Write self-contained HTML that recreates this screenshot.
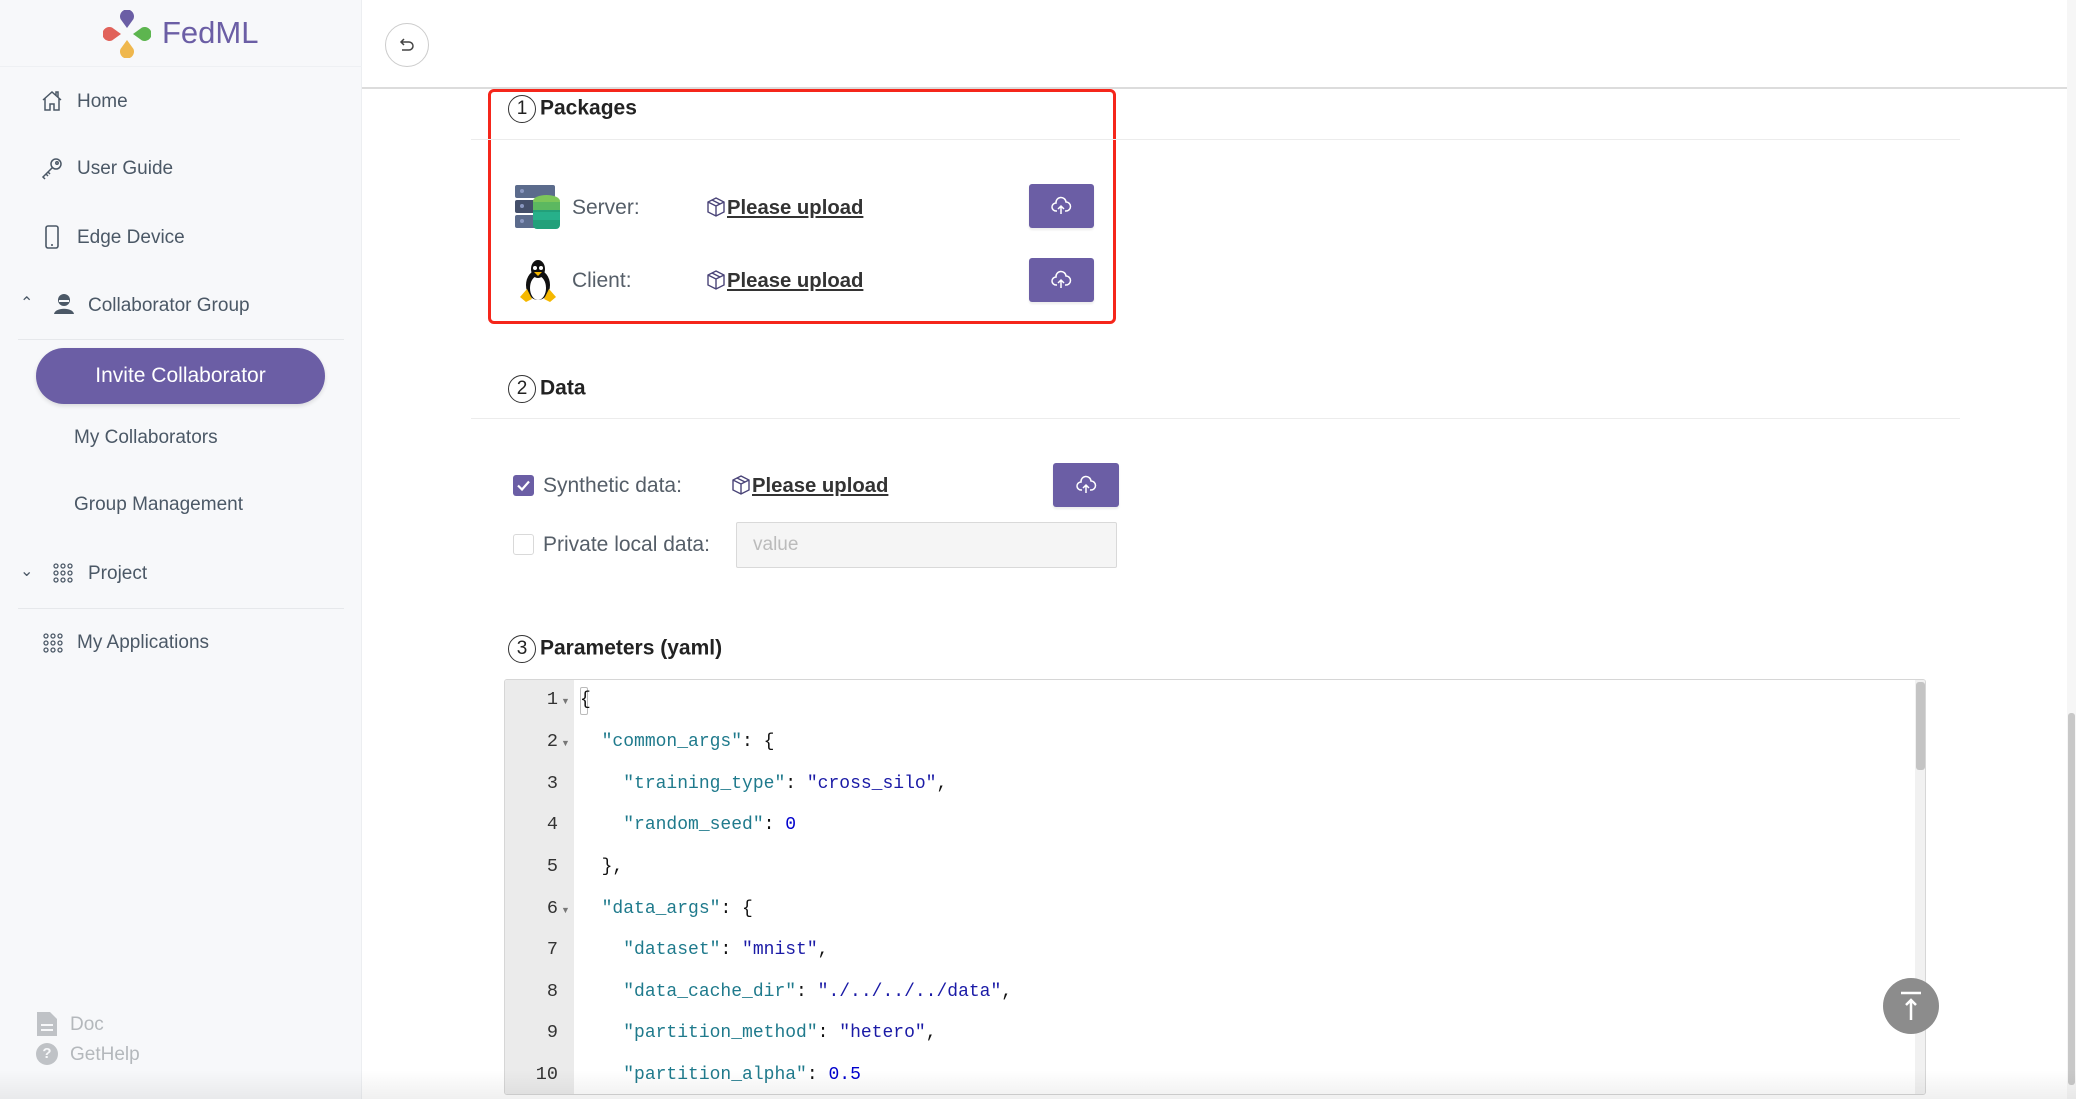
<!DOCTYPE html>
<html><head><meta charset="utf-8"><style>
*{margin:0;padding:0;box-sizing:border-box}
body{width:2076px;height:1099px;overflow:hidden;background:#fff;font-family:"Liberation Sans",sans-serif;position:relative}
.a{position:absolute}
.side{left:0;top:0;width:362px;height:1099px;background:#f7f8fa;border-right:1px solid #eceef1}
.nav{position:absolute;font-size:19px;color:#4b5866;line-height:24px;white-space:nowrap}
.hd{font-size:21px;font-weight:bold;color:#222;position:absolute;line-height:26px}
.num{display:inline-block;width:28px;height:28px;border:1.5px solid #333;border-radius:50%;text-align:center;font-weight:normal;font-size:19px;line-height:25px;margin-right:4px;vertical-align:middle}
.lbl{position:absolute;font-size:21px;color:#555e68;line-height:26px}
.lnk{position:absolute;font-size:20.3px;color:#333;font-weight:bold;text-decoration:underline;line-height:26px;white-space:nowrap}
.btn{position:absolute;background:#6b5ea5;border-radius:3px;box-shadow:0 2px 2px rgba(0,0,0,.08)}
.code{position:absolute;font-family:"Liberation Mono",monospace;font-size:18px;white-space:pre;line-height:24px;color:#111}
.ln{position:absolute;width:50px;text-align:right;font-family:"Liberation Mono",monospace;font-size:18.5px;color:#333;line-height:24px}
.k{color:#1f7a8c}.s{color:#1a1aa6}.n{color:#0000cd}
</style></head><body>
<div class="a side"></div>
<div class="a" style="left:0;top:66px;width:362px;height:1px;background:#eef0f3"></div>
<!-- logo -->
<svg class="a" style="left:103px;top:10px" width="48" height="48" viewBox="0 0 48 48">
<path d="M24 20 L17.5 11 A7 7 0 1 1 30.5 11 Z" fill="#6b5ea5" transform="translate(0,-2)"/>
<path d="M20 24 L11 17.5 A7 7 0 1 0 11 30.5 Z" fill="#e1625a" transform="translate(-2,0)"/>
<path d="M28 24 L37 17.5 A7 7 0 1 1 37 30.5 Z" fill="#5db54f" transform="translate(2,0)"/>
<path d="M24 28 L17.5 37 A7 7 0 1 0 30.5 37 Z" fill="#efb74d" transform="translate(0,2)"/>
</svg>
<div class="a" style="left:162px;top:14px;font-size:31px;color:#6b5ea5;line-height:38px">FedML</div>
<!-- nav icons -->
<svg class="a" style="left:40px;top:89px" width="24" height="24" viewBox="0 0 24 24" fill="none" stroke="#4b5866" stroke-width="1.5"><path d="M3 11 L12 3 L21 11 M5 9 V21 H10 V15 H14 V21 H19 V9 M16 6 V3 H18 V8"/></svg>
<div class="nav" style="left:77px;top:90px">Home</div>
<svg class="a" style="left:40px;top:156px" width="24" height="24" viewBox="0 0 24 24" fill="none" stroke="#4b5866" stroke-width="1.5"><circle cx="16" cy="8" r="5"/><circle cx="17" cy="7" r="1.2"/><path d="M12.5 11.5 L3 21 L5 23 M6 18 L8 20 M8 16 L10 18"/></svg>
<div class="nav" style="left:77px;top:157px">User Guide</div>
<svg class="a" style="left:42px;top:224px" width="20" height="26" viewBox="0 0 20 26" fill="none" stroke="#4b5866" stroke-width="1.6"><rect x="4" y="2" width="12" height="22" rx="2"/><path d="M9 21 H11"/></svg>
<div class="nav" style="left:77px;top:226px">Edge Device</div>
<div class="nav" style="left:20px;top:292px;font-size:16px">&#8963;</div>
<svg class="a" style="left:52px;top:292px" width="24" height="24" viewBox="0 0 24 24" fill="#4b5866"><circle cx="12" cy="8" r="6"/><path d="M2 22 C3 15 21 15 22 22Z"/><rect x="7" y="8" width="10" height="2" fill="#f7f8fa"/></svg>
<div class="nav" style="left:88px;top:294px">Collaborator Group</div>
<div class="a" style="left:18px;top:339px;width:326px;height:1px;background:#e6e8eb"></div>
<div class="a" style="left:36px;top:348px;width:289px;height:56px;border-radius:28px;background:#6b5ea5;color:#fff;font-size:21px;text-align:center;line-height:56px;box-shadow:0 2px 4px rgba(0,0,0,.12)">Invite Collaborator</div>
<div class="nav" style="left:74px;top:426px">My Collaborators</div>
<div class="nav" style="left:74px;top:493px">Group Management</div>
<div class="nav" style="left:20px;top:560px;font-size:16px">&#8964;</div>
<svg class="a" style="left:52px;top:562px" width="22" height="22" viewBox="0 0 22 22" fill="none" stroke="#4b5866" stroke-width="1.3"><g><circle cx="4" cy="4" r="2"/><circle cx="11" cy="4" r="2"/><circle cx="18" cy="4" r="2"/><circle cx="4" cy="11" r="2"/><circle cx="11" cy="11" r="2"/><circle cx="18" cy="11" r="2"/><circle cx="4" cy="18" r="2"/><circle cx="11" cy="18" r="2"/><circle cx="18" cy="18" r="2"/></g></svg>
<div class="nav" style="left:88px;top:562px">Project</div>
<div class="a" style="left:18px;top:608px;width:326px;height:1px;background:#e6e8eb"></div>
<svg class="a" style="left:42px;top:632px" width="22" height="22" viewBox="0 0 22 22" fill="none" stroke="#4b5866" stroke-width="1.3"><g><circle cx="4" cy="4" r="2"/><circle cx="11" cy="4" r="2"/><circle cx="18" cy="4" r="2"/><circle cx="4" cy="11" r="2"/><circle cx="11" cy="11" r="2"/><circle cx="18" cy="11" r="2"/><circle cx="4" cy="18" r="2"/><circle cx="11" cy="18" r="2"/><circle cx="18" cy="18" r="2"/></g></svg>
<div class="nav" style="left:77px;top:631px">My Applications</div>
<svg class="a" style="left:36px;top:1012px" width="22" height="24" viewBox="0 0 22 24"><path d="M1 0 H14 L21 7 V24 H1Z" fill="#bfc2c6"/><path d="M5 13 H17 M5 18 H17" stroke="#f7f8fa" stroke-width="2"/></svg>
<div class="nav" style="left:70px;top:1013px;color:#b4b8bc">Doc</div>
<div class="a" style="left:36px;top:1043px;width:22px;height:22px;border-radius:50%;background:#bfc2c6;color:#f7f8fa;font-size:15px;font-weight:bold;text-align:center;line-height:22px">?</div>
<div class="nav" style="left:70px;top:1043px;color:#b4b8bc">GetHelp</div>
<!-- header -->
<div class="a" style="left:362px;top:87px;width:1705px;height:2px;background:#dcdcdc"></div>
<div class="a" style="left:385px;top:23px;width:44px;height:44px;border-radius:50%;border:1.5px solid #ccc;background:#fff"></div>
<svg class="a" style="left:398px;top:36px" width="18" height="18" viewBox="0 0 18 18" fill="none" stroke="#444" stroke-width="1.5"><path d="M6 3 L3 6 L6 9 M3 6 H11 A4 4 0 0 1 11 14 H4"/></svg>
<!-- packages -->
<div class="a" style="left:488px;top:89px;width:628px;height:235px;border:3px solid #f5261b;border-radius:6px"></div>
<div class="hd" style="left:508px;top:95px"><span class="num">1</span>Packages</div>
<div class="a" style="left:471px;top:139px;width:1489px;height:1px;background:#ececec"></div>
<svg class="a" style="left:515px;top:185px" width="46" height="45" viewBox="0 0 46 45"><rect x="0" y="0" width="40" height="13" rx="2" fill="#5b6b8c"/><rect x="0" y="15" width="40" height="13" rx="2" fill="#444f6a"/><rect x="0" y="30" width="40" height="13" rx="2" fill="#5b6b8c"/><circle cx="7" cy="6" r="2" fill="#8a97c0"/><circle cx="7" cy="21" r="2" fill="#8a97c0"/><circle cx="7" cy="36" r="2" fill="#8a97c0"/><rect x="18" y="14" width="27" height="30" rx="4" fill="#22a07a"/><ellipse cx="31.5" cy="16" rx="13.5" ry="6" fill="#7cc65a"/><rect x="18" y="17" width="27" height="8" fill="#5cb860"/><rect x="18" y="27" width="27" height="8" fill="#27b08a"/></svg>
<div class="lbl" style="left:572px;top:195px">Server:</div>
<svg class="a" style="left:706px;top:197px" width="20" height="20" viewBox="0 0 20 20" fill="none" stroke="#4a4478" stroke-width="1.4"><path d="M10 1 L18 5 V15 L10 19 L2 15 V5Z M2 5 L10 9 L18 5 M10 9 V19 M6 3 L14 7"/></svg>
<div class="lnk" style="left:727px;top:195px">Please upload</div>
<div class="btn" style="left:1029px;top:184px;width:65px;height:44px"></div>
<svg class="a" style="left:1050px;top:195px" width="22" height="22" viewBox="0 0 22 22" fill="none" stroke="#fff" stroke-width="1.5"><path d="M7 16 H6 A4 4 0 0 1 6 8 A5 5 0 0 1 16 7 A4.5 4.5 0 0 1 16 16 H15 M11 19 V11 M8 14 L11 11 L14 14"/></svg>
<svg class="a" style="left:518px;top:259px" width="40" height="43" viewBox="0 0 40 43"><ellipse cx="20" cy="26" rx="12" ry="15" fill="#111"/><ellipse cx="20" cy="29" rx="8" ry="12" fill="#fff"/><ellipse cx="20" cy="10" rx="7" ry="9" fill="#111"/><circle cx="17" cy="9" r="2" fill="#fff"/><circle cx="23" cy="9" r="2" fill="#fff"/><path d="M16 13 L24 13 L20 17Z" fill="#f5b800"/><path d="M2 38 L9 30 L14 40 L8 43Z M38 38 L31 30 L26 40 L32 43Z" fill="#f5b800"/></svg>
<div class="lbl" style="left:572px;top:268px">Client:</div>
<svg class="a" style="left:706px;top:270px" width="20" height="20" viewBox="0 0 20 20" fill="none" stroke="#4a4478" stroke-width="1.4"><path d="M10 1 L18 5 V15 L10 19 L2 15 V5Z M2 5 L10 9 L18 5 M10 9 V19 M6 3 L14 7"/></svg>
<div class="lnk" style="left:727px;top:268px">Please upload</div>
<div class="btn" style="left:1029px;top:258px;width:65px;height:44px"></div>
<svg class="a" style="left:1050px;top:269px" width="22" height="22" viewBox="0 0 22 22" fill="none" stroke="#fff" stroke-width="1.5"><path d="M7 16 H6 A4 4 0 0 1 6 8 A5 5 0 0 1 16 7 A4.5 4.5 0 0 1 16 16 H15 M11 19 V11 M8 14 L11 11 L14 14"/></svg>
<!-- data -->
<div class="hd" style="left:508px;top:375px"><span class="num">2</span>Data</div>
<div class="a" style="left:471px;top:418px;width:1489px;height:1px;background:#ececec"></div>
<div class="a" style="left:513px;top:475px;width:21px;height:21px;border-radius:3px;background:#6b5ea5"></div>
<svg class="a" style="left:513px;top:475px" width="21" height="21" viewBox="0 0 21 21" fill="none" stroke="#fff" stroke-width="2.2"><path d="M5 10.5 L9 14.5 L16 6.5"/></svg>
<div class="lbl" style="left:543px;top:473px">Synthetic data:</div>
<svg class="a" style="left:731px;top:475px" width="20" height="20" viewBox="0 0 20 20" fill="none" stroke="#4a4478" stroke-width="1.4"><path d="M10 1 L18 5 V15 L10 19 L2 15 V5Z M2 5 L10 9 L18 5 M10 9 V19 M6 3 L14 7"/></svg>
<div class="lnk" style="left:752px;top:473px">Please upload</div>
<div class="btn" style="left:1053px;top:463px;width:66px;height:44px"></div>
<svg class="a" style="left:1075px;top:474px" width="22" height="22" viewBox="0 0 22 22" fill="none" stroke="#fff" stroke-width="1.5"><path d="M7 16 H6 A4 4 0 0 1 6 8 A5 5 0 0 1 16 7 A4.5 4.5 0 0 1 16 16 H15 M11 19 V11 M8 14 L11 11 L14 14"/></svg>
<div class="a" style="left:513px;top:534px;width:21px;height:21px;border-radius:3px;border:1.5px solid #d9d9d9;background:#fff"></div>
<div class="lbl" style="left:543px;top:532px">Private local data:</div>
<div class="a" style="left:736px;top:522px;width:381px;height:46px;border:1.5px solid #d9d9d9;border-radius:2px;background:#f5f5f5;color:#bbb;font-size:19px;line-height:43px;padding-left:16px">value</div>
<!-- params -->
<div class="hd" style="left:508px;top:635px"><span class="num">3</span>Parameters (yaml)</div>
<div class="a" style="left:504px;top:679px;width:1422px;height:416px;border:1.5px solid #d6d6d6;border-radius:3px;background:#fff;overflow:hidden">
 <div class="a" style="left:0;top:0;width:69px;height:420px;background:#ebebeb"></div>
 <div class="a" style="left:1410px;top:0;width:12px;height:420px;background:#f1f1f1"></div>
 <div class="a" style="left:1411px;top:2px;width:9px;height:88px;border-radius:3px;background:#c4c4c4"></div>
 <div class="a" style="left:75px;top:7px;width:8px;height:28px;border:1px solid #bbb;border-radius:2px"></div>
</div>
<div class="ln" style="left:508px;top:688px">1</div><div class="ln" style="left:508px;top:730px">2</div><div class="ln" style="left:508px;top:772px">3</div><div class="ln" style="left:508px;top:813px">4</div><div class="ln" style="left:508px;top:855px">5</div><div class="ln" style="left:508px;top:897px">6</div><div class="ln" style="left:508px;top:938px">7</div><div class="ln" style="left:508px;top:980px">8</div><div class="ln" style="left:508px;top:1021px">9</div><div class="ln" style="left:508px;top:1063px">10</div>
<div class="a" style="left:561px;top:696px;font-size:9px;color:#777">&#9660;</div><div class="a" style="left:561px;top:738px;font-size:9px;color:#777">&#9660;</div><div class="a" style="left:561px;top:905px;font-size:9px;color:#777">&#9660;</div>
<div class="code" style="left:580px;top:688px">{</div>
<div class="code" style="left:580px;top:730px">  <span class="k">"common_args"</span>: {</div>
<div class="code" style="left:580px;top:772px">    <span class="k">"training_type"</span>: <span class="s">"cross_silo"</span>,</div>
<div class="code" style="left:580px;top:813px">    <span class="k">"random_seed"</span>: <span class="n">0</span></div>
<div class="code" style="left:580px;top:855px">  },</div>
<div class="code" style="left:580px;top:897px">  <span class="k">"data_args"</span>: {</div>
<div class="code" style="left:580px;top:938px">    <span class="k">"dataset"</span>: <span class="s">"mnist"</span>,</div>
<div class="code" style="left:580px;top:980px">    <span class="k">"data_cache_dir"</span>: <span class="s">"./../../../data"</span>,</div>
<div class="code" style="left:580px;top:1021px">    <span class="k">"partition_method"</span>: <span class="s">"hetero"</span>,</div>
<div class="code" style="left:580px;top:1063px">    <span class="k">"partition_alpha"</span>: <span class="n">0.5</span></div>
<!-- page scrollbar -->
<div class="a" style="left:2067px;top:0;width:9px;height:1099px;background:#f6f6f6"></div>
<div class="a" style="left:2068px;top:713px;width:7px;height:372px;border-radius:3px;background:#c8c8c8"></div>
<!-- back to top -->
<div class="a" style="left:1883px;top:978px;width:56px;height:56px;border-radius:50%;background:#8c8c8c"></div>
<svg class="a" style="left:1897px;top:990px" width="28" height="32" viewBox="0 0 28 32" fill="none" stroke="#fff" stroke-width="2.5"><path d="M4 3 H24 M14 30 V10 M9 15 L14 10 L19 15"/></svg>
<div class="a" style="left:0;top:1070px;width:2076px;height:29px;background:linear-gradient(rgba(0,0,0,0),rgba(0,0,0,.06))"></div>
</body></html>
